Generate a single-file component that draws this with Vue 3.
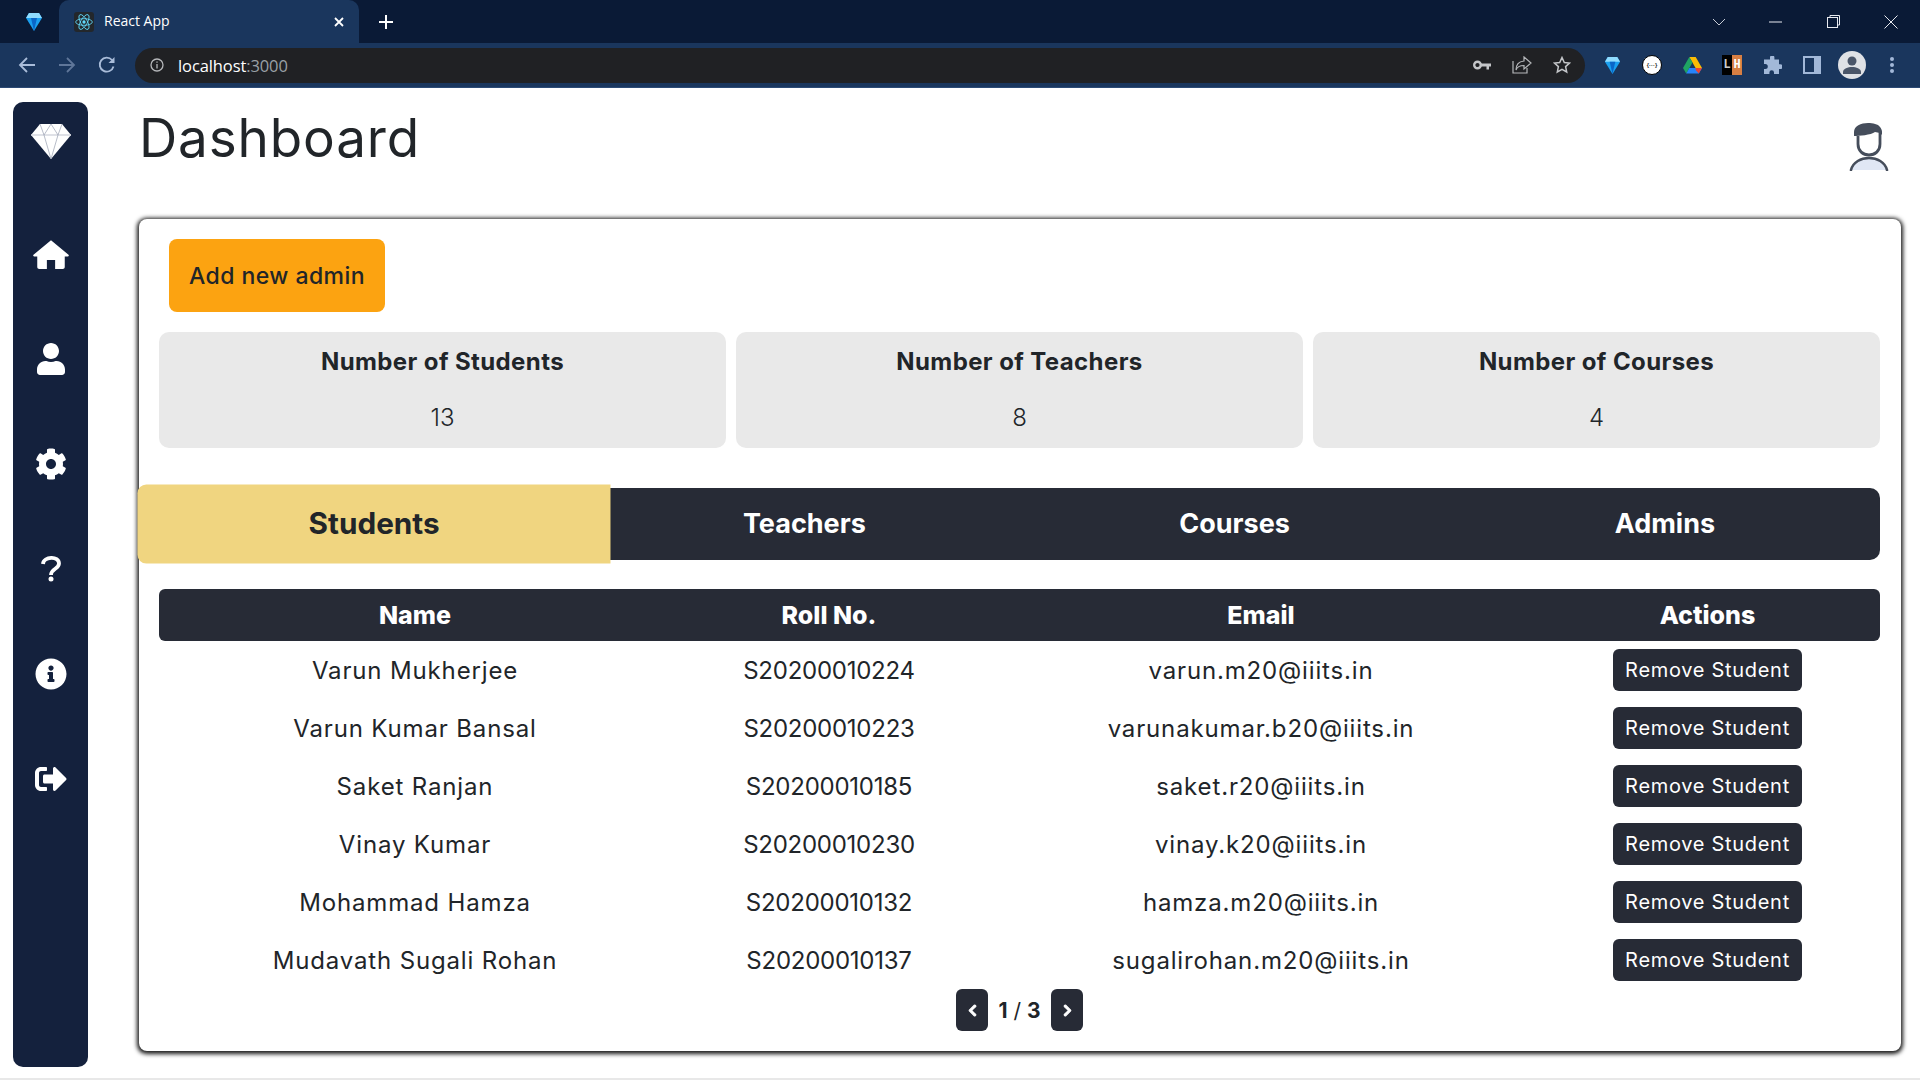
<script setup>
const stats = [
  { label: 'Number of Students', value: 13 },
  { label: 'Number of Teachers', value: 8 },
  { label: 'Number of Courses', value: 4 },
]
const tabs = ['Students', 'Teachers', 'Courses', 'Admins']
const students = [
  ['Varun Mukherjee', 'S20200010224', 'varun.m20@iiits.in'],
  ['Varun Kumar Bansal', 'S20200010223', 'varunakumar.b20@iiits.in'],
  ['Saket Ranjan', 'S20200010185', 'saket.r20@iiits.in'],
  ['Vinay Kumar', 'S20200010230', 'vinay.k20@iiits.in'],
  ['Mohammad Hamza', 'S20200010132', 'hamza.m20@iiits.in'],
  ['Mudavath Sugali Rohan', 'S20200010137', 'sugalirohan.m20@iiits.in'],
]
const navIcons = [
  { vb: '0 0 576 512', w: 36, d: 'M288 36 8 268c-10 9-4 26 10 26h50v170c0 18 14 32 32 32h122V352h132v144h122c18 0 32-14 32-32V294h50c14 0 20-17 10-26z' },
  { vb: '0 0 448 512', w: 28, d: 'M224 256c70.7 0 128-57.3 128-128S294.7 0 224 0 96 57.3 96 128s57.3 128 128 128zm89.6 32h-16.7c-22.2 10.2-46.9 16-72.9 16s-50.6-5.8-72.9-16h-16.7C60.2 288 0 348.2 0 422.4V464c0 26.5 21.5 48 48 48h352c26.5 0 48-21.5 48-48v-41.6c0-74.2-60.2-134.4-134.4-134.4z' },
  { vb: '0 0 512 512', w: 32, d: 'M487.4 315.7l-42.6-24.6c4.3-23.2 4.3-47 0-70.2l42.6-24.6c4.9-2.8 7.1-8.6 5.5-14-11.1-35.6-30-67.8-54.7-94.6-3.8-4.1-10-5.1-14.8-2.3L380.8 110c-17.9-15.4-38.5-27.3-60.8-35.1V25.8c0-5.6-3.9-10.5-9.4-11.7-36.7-8.2-74.3-7.8-109.2 0-5.5 1.2-9.4 6.1-9.4 11.7V75c-22.2 7.9-42.8 19.8-60.8 35.1L88.7 85.5c-4.9-2.8-11-1.9-14.8 2.3-24.7 26.7-43.6 58.9-54.7 94.6-1.7 5.4.6 11.2 5.5 14L67.3 221c-4.3 23.2-4.3 47 0 70.2l-42.6 24.6c-4.9 2.8-7.1 8.6-5.5 14 11.1 35.6 30 67.8 54.7 94.6 3.8 4.1 10 5.1 14.8 2.3l42.6-24.6c17.9 15.4 38.5 27.3 60.8 35.1v49.2c0 5.6 3.9 10.5 9.4 11.7 36.7 8.2 74.3 7.8 109.2 0 5.5-1.2 9.4-6.1 9.4-11.7v-49.2c22.2-7.9 42.8-19.8 60.8-35.1l42.6 24.6c4.9 2.8 11 1.9 14.8-2.3 24.7-26.7 43.6-58.9 54.7-94.6 1.5-5.5-.7-11.3-5.6-14.1zM256 336c-44.1 0-80-35.9-80-80s35.9-80 80-80 80 35.9 80 80-35.9 80-80 80z' },
  { vb: '0 0 20 26', w: 20, stroke: true, d: 'M2 8.500C2.500 1 18 0 18 8c0 5.500-8 5-8 11.500' },
  { vb: '0 0 512 512', w: 32, d: 'M256 8C119.043 8 8 119.083 8 256c0 136.997 111.043 248 248 248s248-111.003 248-248C504 119.083 392.957 8 256 8zm0 110c23.196 0 42 18.804 42 42s-18.804 42-42 42-42-18.804-42-42 18.804-42 42-42zm56 254c0 6.627-5.373 12-12 12h-88c-6.627 0-12-5.373-12-12v-24c0-6.627 5.373-12 12-12h12v-64h-12c-6.627 0-12-5.373-12-12v-24c0-6.627 5.373-12 12-12h64c6.627 0 12 5.373 12 12v100h12c6.627 0 12 5.373 12 12v24z' },
  { vb: '0 0 512 512', w: 32, d: 'M497 273L329 441c-15 15-41 4.500-41-17v-96H152c-13.300 0-24-10.700-24-24v-96c0-13.300 10.700-24 24-24h136V88c0-21.400 25.900-32 41-17l168 168c9.300 9.400 9.300 24.600 0 34zM192 436v-40c0-6.600-5.400-12-12-12H96c-17.700 0-32-14.300-32-32V160c0-17.700 14.300-32 32-32h84c6.600 0 12-5.400 12-12V76c0-6.600-5.400-12-12-12H96c-53 0-96 43-96 96v192c0 53 43 96 96 96h84c6.600 0 12-5.400 12-12z' },
]
</script>

<template>
  <div class="window">
    <div class="strip">
      <div class="pinned">
        <svg width="18" height="19" viewBox="0 0 18 19"><path d="M1 6 4 1h10l3 5-8 13z" fill="#1aa0f0"/><path d="M4 1h10l3 5H1z" fill="#8fdcff"/><path d="M6 6h6l-3 13z" fill="#0a66c8"/></svg>
      </div>
      <div class="tab">
        <span class="favicon">
          <svg width="20" height="20" viewBox="-12 -12 24 24" fill="none" stroke="#61dafb" stroke-width="1"><ellipse rx="10" ry="4"/><ellipse rx="10" ry="4" transform="rotate(60)"/><ellipse rx="10" ry="4" transform="rotate(120)"/><circle r="2" fill="#61dafb" stroke="none"/></svg>
        </span>
        <span class="tab-title">React App</span>
        <svg class="tab-close" width="10" height="10" viewBox="0 0 10 10" stroke="#fff" stroke-width="1.800"><path d="M1 1l8 8M9 1l-8 8"/></svg>
      </div>
      <svg class="plus" width="16" height="16" viewBox="0 0 16 16" stroke="#fff" stroke-width="2"><path d="M8 1v14M1 8h14"/></svg>
      <div class="spacer"></div>
      <svg class="chev" width="14" height="8" viewBox="0 0 14 8" fill="none" stroke="#c7ccd6"><path d="M1 1l6 6 6-6"/></svg>
      <span class="win-slot"><svg width="13" height="2" viewBox="0 0 13 2" stroke="#e8eaf0"><path d="M0 1h13"/></svg></span>
      <span class="win-slot"><svg width="13" height="13" viewBox="0 0 13 13" fill="none" stroke="#e8eaf0"><rect x=".5" y="2.500" width="10" height="10"/><path d="M3 2.500V.5h9.500V10h-2"/></svg></span>
      <span class="win-slot"><svg width="14" height="14" viewBox="0 0 14 14" stroke="#e8eaf0"><path d="M.5.5l13 13M13.500.5l-13 13"/></svg></span>
    </div>

    <div class="toolbar">
      <span class="tool"><svg width="18" height="18" viewBox="0 0 18 18" fill="none" stroke="#a9bcd9" stroke-width="1.800"><path d="M17 9H2M9 2 2 9l7 7"/></svg></span>
      <span class="tool"><svg width="18" height="18" viewBox="0 0 18 18" fill="none" stroke="#5f7699" stroke-width="1.800"><path d="M1 9h15M9 2l7 7-7 7"/></svg></span>
      <span class="tool"><svg width="18" height="18" viewBox="0 0 18 18" fill="none" stroke="#a9bcd9" stroke-width="1.800"><path d="M15.500 10.500A7 7 0 1 1 14 4"/><path d="M16.500 1v6h-6z" fill="#a9bcd9" stroke="none"/></svg></span>
      <div class="omnibox">
        <svg class="info" width="14" height="14" viewBox="0 0 14 14" fill="none" stroke="#b5b7ba" stroke-width="1.300"><circle cx="7" cy="7" r="6"/><path d="M7 6v4.500M7 3.500v1.300"/></svg>
        <span class="url">localhost<span class="port">:3000</span></span>
        <div class="spacer"></div>
        <span class="omni-icon"><svg width="18" height="11" viewBox="0 0 18 11"><circle cx="4.500" cy="5" r="3.300" fill="none" stroke="#c4c6c9" stroke-width="2.400"/><path d="M8 3.500h10v3h-2v3h-2.500v-3H8z" fill="#c4c6c9"/></svg></span>
        <span class="omni-icon"><svg width="20" height="18" viewBox="0 0 20 18" fill="none" stroke="#b5b7ba" stroke-width="1.200"><path d="M1 5v12h14v-5"/><path d="M12 1l7 6-7 6V9.500C8 9.500 5 11 4 14c0-5 3-8.500 8-9z"/></svg></span>
        <span class="omni-icon"><svg width="18" height="18" viewBox="0 0 18 18" fill="none" stroke="#c4c6c9" stroke-width="1.500"><path d="M9 1.500l2.300 5 5.200.6-3.900 3.500 1.100 5.400L9 13.300 4.300 16l1.100-5.400L1.500 7.100l5.200-.6z"/></svg></span>
      </div>
      <span class="ext"><svg width="17" height="18" viewBox="0 0 18 19"><path d="M1 6 4 1h10l3 5-8 13z" fill="#1aa0f0"/><path d="M4 1h10l3 5H1z" fill="#8fdcff"/><path d="M6 6h6l-3 13z" fill="#0a66c8"/></svg></span>
      <span class="ext"><span class="gql"><span>{···}</span></span></span>
      <span class="ext"><svg width="19" height="17" viewBox="0 0 19 17"><path d="M6.300 0h6.400l6.300 11h-6.400z" fill="#fbbc04"/><path d="M6.300 0 0 11l3.200 5.500L9.500 5.500z" fill="#1fa463"/><path d="M3.200 16.500h12.600L19 11H6.300z" fill="#2684fc"/><path d="M12.600 11H19l-3.200 5.500L12.600 13z" fill="#ea4335"/></svg></span>
      <span class="ext"><span class="lh"><span class="lh-l">L</span><span class="lh-h">H</span></span></span>
      <span class="ext"><svg width="19" height="19" viewBox="0 0 19 19"><path d="M7 1.500a2.200 2.200 0 0 1 4.400 0V3.500H16v4.700h1.200a2.400 2.400 0 0 1 0 4.800H16V18h-5v-1.500a2.300 2.300 0 0 0-4.600 0V18H1v-5h1.300a2.500 2.500 0 0 0 0-5H1V3.500h6z" fill="#a2b8d8"/></svg></span>
      <span class="ext"><svg width="18" height="18" viewBox="0 0 18 18"><path d="M0 0h18v18H0zM2 2v14h9V2z" fill="#a2b8d8" fill-rule="evenodd"/><rect x="2" y="2" width="9" height="14" fill="#1a365d"/></svg></span>
      <span class="ext"><span class="avatar"><svg width="20" height="20" viewBox="0 0 20 20" fill="#4a5568"><circle cx="10" cy="6" r="4.500"/><path d="M1 19v-2c0-3.500 5-5 9-5s9 1.500 9 5v2z"/></svg></span></span>
      <span class="ext"><svg width="4" height="16" viewBox="0 0 4 16" fill="#a2b8d8"><circle cx="2" cy="2" r="2"/><circle cx="2" cy="8" r="2"/><circle cx="2" cy="14" r="2"/></svg></span>
    </div>

    <div class="page">
      <aside class="sidebar">
        <div class="logo">
          <svg width="40" height="36" viewBox="0 0 40 36">
            <path d="M0 12 9 1h22l9 11-20 24z" fill="#fff"/>
            <path d="M0 12h40" stroke="#d4d7df" stroke-width="1.500"/>
            <path d="M9 1l4 11 7 24 7-24 4-11M13 12l7-11 7 11" fill="none" stroke="#a5abba" stroke-width=".8"/>
          </svg>
        </div>
        <div v-for="(icon, i) in navIcons" :key="i" class="nav-item">
          <svg v-if="icon.stroke" :width="icon.w" height="27" :viewBox="icon.vb" fill="#fff"><path :d="icon.d" fill="none" stroke="#fff" stroke-width="3.800"/><circle cx="10" cy="23.500" r="2.500"/></svg>
          <svg v-else :width="icon.w" height="32" :viewBox="icon.vb" fill="#fff"><path :d="icon.d"/></svg>
        </div>
      </aside>

      <main class="main">
        <header class="header">
          <h1 class="title">Dashboard</h1>
          <svg class="person" width="40" height="48" viewBox="0 0 40 48">
            <path d="M2 47C4 39 12 35 20 35s16 4 18 12z" fill="#e0e7f5"/>
            <path d="M2 47C4 39 12 35 20 35s16 4 18 12" fill="none" stroke="#454d5b" stroke-width="2.600" stroke-linecap="round"/>
            <path d="M9 13v8c0 7 5 11 11 11s11-4 11-11V8" fill="none" stroke="#454d5b" stroke-width="2.800"/>
            <path d="M5 13V9C5 3 12 0 19 0c5 0 10 1 12 4 1 1 2 3 2 5v3l-2-2-5-1c-4 3-16 4-21 4z" fill="#454d5b"/>
          </svg>
        </header>

        <section class="card">
          <button class="add-btn">Add new admin</button>

          <div class="stats">
            <div v-for="s in stats" :key="s.label" class="stat">
              <div class="stat-label">{{ s.label }}</div>
              <div class="stat-value">{{ s.value }}</div>
            </div>
          </div>

          <div class="tabs">
            <div v-for="(t, i) in tabs" :key="t" class="tab-item" :class="{ active: i === 0 }">{{ t }}</div>
          </div>

          <div class="table-head cols">
            <div>Name</div>
            <div>Roll No.</div>
            <div>Email</div>
            <div>Actions</div>
          </div>
          <div v-for="r in students" :key="r[1]" class="row cols">
            <div class="spread">{{ r[0] }}</div>
            <div class="roll">{{ r[1] }}</div>
            <div class="spread">{{ r[2] }}</div>
            <div><button class="remove">Remove Student</button></div>
          </div>

          <div class="pager">
            <button class="page-btn"><svg width="9" height="13" viewBox="0 0 320 512" fill="#fff" stroke="#fff" stroke-width="40"><path d="M34.52 239.03L228.87 44.69c9.37-9.37 24.57-9.37 33.94 0l22.67 22.67c9.36 9.36 9.37 24.52.04 33.9L131.49 256l154.02 154.75c9.34 9.38 9.32 24.54-.04 33.9l-22.67 22.67c-9.37 9.37-24.57 9.37-33.94 0L34.52 272.97c-9.37-9.37-9.37-24.57 0-33.94z"/></svg></button>
            <span class="page-text"><b>1</b> / <b>3</b></span>
            <button class="page-btn"><svg width="9" height="13" viewBox="0 0 320 512" fill="#fff" stroke="#fff" stroke-width="40"><path d="M285.476 272.971L91.132 467.314c-9.373 9.373-24.569 9.373-33.941 0l-22.667-22.667c-9.357-9.357-9.375-24.522-.04-33.901L188.505 256 34.484 101.255c-9.335-9.379-9.317-24.544.04-33.901l22.667-22.667c9.373-9.373 24.569-9.373 33.941 0L285.475 239.03c9.373 9.372 9.373 24.568.001 33.941z"/></svg></button>
          </div>
        </section>
      </main>
    </div>
    <div class="foot-line"></div>
  </div>
</template>

<style>
html, body { margin: 0; overflow: hidden; background: #fff; }
</style>

<style scoped>
.window { width: 1920px; height: 1080px; display: flex; flex-direction: column; overflow: hidden; font-family: Inter, "Liberation Sans", sans-serif; color: #212529; background: #fff; }
.spacer { flex: 1; }

.strip { height: 43px; background: #0a1a36; display: flex; align-items: center; flex: none; }
.pinned { width: 59px; height: 43px; display: flex; align-items: center; justify-content: center; padding-left: 9px; box-sizing: border-box; }
.tab { width: 300px; height: 43px; background: #1a365d; border-radius: 10px 10px 0 0; display: flex; align-items: center; padding-left: 15px; box-sizing: border-box; }
.favicon { width: 20px; height: 20px; background: #23272b; border-radius: 3px; display: flex; }
.tab-title { margin-left: 10px; margin-top: -2px; color: #fff; font: 14px "Open Sans", sans-serif; }
.tab-close { margin-left: auto; margin-right: 15px; }
.plus { margin-left: 19px; }
.chev { margin-right: 20px; }
.win-slot { width: 58px; display: flex; justify-content: center; }

.toolbar { height: 45px; background: #1a365d; border-bottom: 1px solid #2c4a75; box-sizing: border-box; display: flex; align-items: center; padding-left: 7px; flex: none; }
.tool { width: 40px; display: flex; justify-content: center; }
.omnibox { width: 1450px; height: 35px; margin-left: 8px; margin-right: 7px; background: #202124; border-radius: 18px; display: flex; align-items: center; padding: 0 3px 0 15px; box-sizing: border-box; }
.url { margin-left: 14px; color: #fff; font: 16.500px "Open Sans", sans-serif; letter-spacing: -.1px; }
.port { color: #9aa0a6; }
.omni-icon { width: 40px; display: flex; justify-content: center; }
.ext { width: 40px; display: flex; justify-content: center; align-items: center; }
.gql { width: 18px; height: 18px; border-radius: 50%; background: #fff; border: 1px solid #000; color: #333; font: 700 6px "Liberation Sans", sans-serif; display: flex; align-items: center; justify-content: center; }
.lh { display: flex; width: 20px; height: 20px; font: 700 12px "Liberation Mono", monospace; line-height: 20px; text-align: center; }
.lh-l { width: 10px; background: #000; color: #ccc; }
.lh-h { width: 10px; background: #d87f43; color: #fff; }
.avatar { width: 28px; height: 28px; border-radius: 50%; background: #dfe1e5; display: flex; align-items: center; justify-content: center; }

.page { flex: 1; display: flex; padding: 14px 19px 0 13px; gap: 51px; min-height: 0; }
.sidebar { width: 75px; height: 965px; background: #14213d; border-radius: 10px; flex: none; display: flex; flex-direction: column; align-items: center; padding-top: 21px; box-sizing: border-box; }
.logo { height: 40px; display: flex; justify-content: center; margin-bottom: 38px; }
.nav-item { height: 105px; display: flex; align-items: center; justify-content: center; flex: none; }

.main { flex: 1; display: flex; flex-direction: column; min-width: 0; }
.header { height: 117px; display: flex; justify-content: space-between; align-items: flex-start; flex: none; }
.title { margin: 6px 0 0 0; font-size: 53px; line-height: 60px; font-weight: 400; letter-spacing: .85px; color: #212529; }
.person { margin: 21px 12px 0 0; }

.card { height: 832px; box-sizing: border-box; border-radius: 8px; background: #fff; box-shadow: 0 1px 4px 1.500px #1a1a1a; padding: 20px 21px 20px 20px; display: flex; flex-direction: column; align-items: stretch; }
.add-btn { align-self: flex-start; margin-left: 10px; width: 216px; height: 73px; border: 0; border-radius: 8px; background: #fca311; color: #212529; font: 500 23px Inter, sans-serif; letter-spacing: .45px; }
.stats { display: grid; grid-template-columns: repeat(3, 1fr); gap: 10px; margin-top: 20px; }
.stat { height: 116px; background: #e9e9e9; border-radius: 10px; text-align: center; padding-top: 15px; box-sizing: border-box; }
.stat-label { font-size: 24px; font-weight: 700; line-height: 30px; letter-spacing: .4px; }
.stat-value { font-size: 24px; margin-top: 26px; line-height: 30px; font-weight: 300; }

.tabs { display: grid; grid-template-columns: repeat(4, 1fr); height: 72px; margin-top: 40px; background: #272b36; border-radius: 10px; flex: none; }
.tab-item { display: flex; align-items: center; justify-content: center; color: #fff; font-size: 27px; font-weight: 700; padding-bottom: 2px; box-sizing: border-box; }
.tab-item.active { background: #f0d580; color: #212529; border-radius: 8px 0 0 8px; transform: scale(1.1); }

.cols { display: grid; grid-template-columns: 512px 316px 548px 1fr; text-align: center; align-items: center; }
.table-head { margin-top: 29px; height: 52px; background: #272b36; border-radius: 6px; color: #fff; font-size: 25px; font-weight: 800; flex: none; }
.row { height: 58px; font-size: 24px; flex: none; }
.spread { letter-spacing: .85px; }
.roll { letter-spacing: -.25px; }
.remove { width: 189px; height: 42px; border: 0; border-radius: 6px; background: #272b36; color: #fff; font: 400 20px Inter, sans-serif; letter-spacing: .7px; padding: 0; }
.pager { display: flex; justify-content: center; align-items: center; height: 42px; flex: none; }
.page-btn { width: 32px; height: 42px; border: 0; border-radius: 6px; background: #272b36; display: flex; align-items: center; justify-content: center; padding: 0; }
.page-text { width: 63px; text-align: center; font-size: 21px; }
.page-text b { font-weight: 700; }
.foot-line { height: 2px; background: #e8e8e8; flex: none; }
</style>
